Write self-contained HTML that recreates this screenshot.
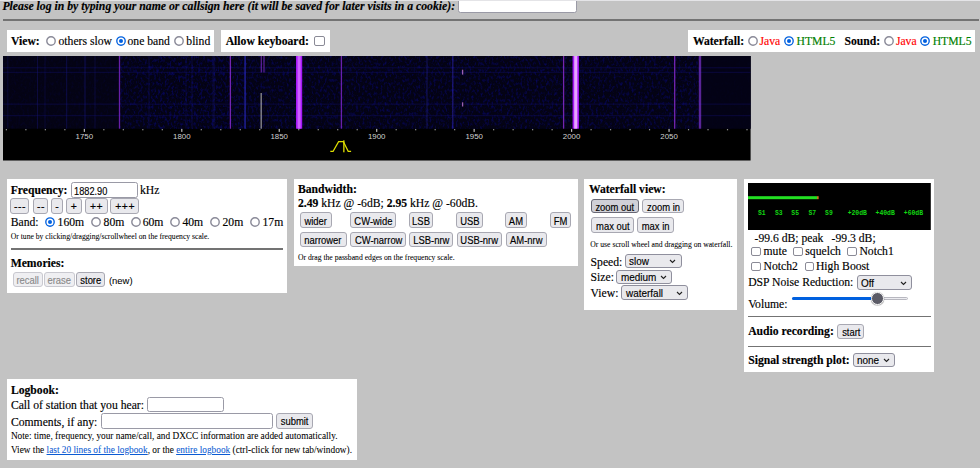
<!DOCTYPE html>
<html><head><meta charset="utf-8"><title>WebSDR</title><style>
html,body{margin:0;padding:0}
body{width:980px;height:468px;overflow:hidden;position:relative;background:#c3c3c3;font-family:"Liberation Serif",serif;color:#000;-webkit-text-stroke:0.15px currentColor}
.t{position:absolute;white-space:nowrap}
.p{position:absolute;background:#fff}
.hr2{position:absolute;background:#737373}
.rad{position:absolute;box-sizing:border-box;border:1.6px solid #80808e;border-radius:50%;background:#fff}
.rad.on{border:1.6px solid #0060df;background:#0060df;box-shadow:inset 0 0 0 1.6px #fff}
.cb{position:absolute;box-sizing:border-box;border:1.8px solid #8a8a96;border-radius:2px;background:#fff}
.btn{position:absolute;box-sizing:border-box;display:flex;align-items:center;justify-content:center;border:1.2px solid #a8a8b2;border-radius:3px;background:#e9e9ed;text-align:center;font-family:"Liberation Sans",sans-serif;color:#000;white-space:nowrap;overflow:hidden}
.btn.pm span{transform:translateY(1.1px) scaleX(1)!important;letter-spacing:0.6px;font-size:10.4px!important;padding-left:0.6px}
.btn.dis{border-color:#c9c9d0;color:#8a8a8a;background:#efeff2}
.btn.hov{background:#d0d0d7;border-color:#676774}
.sel{position:absolute;box-sizing:border-box;display:flex;align-items:center;border:1px solid #8f8f9d;border-radius:3px;background:#e9e9ed;font-family:"Liberation Sans",sans-serif;white-space:nowrap;overflow:hidden}
.sel .sl{display:inline-block;margin-left:3.2px;font-size:11.2px;line-height:11.2px;transform:translateY(0.9px) scaleX(0.89);transform-origin:0 50%}
.sel .chev{position:absolute;right:4.5px}
.inp{position:absolute;box-sizing:border-box;display:flex;align-items:center;border:1.1px solid #9a9aa6;border-radius:2.5px;background:#fff;font-family:"Liberation Sans",sans-serif;padding-left:2.5px;white-space:nowrap;overflow:hidden}
a{color:#0b5bd3;text-decoration:underline}
</style></head>
<body>
<div class="t" style="left:2.40px;top:0.57px;font-size:11.74px;line-height:11.74px;font-weight:bold;font-style:italic;">Please log in by typing your name or callsign here (it will be saved for later visits in a cookie):</div>
<div class="inp" style="left:457.50px;top:-2.00px;width:119.50px;height:15.20px;"></div>
<div class="hr2" style="left:3.00px;top:19.00px;width:976.00px;height:2.00px;"></div>
<div class="p" style="left:6.70px;top:30.30px;width:207.30px;height:21.70px;"></div>
<div class="t" style="left:11.00px;top:36.03px;font-size:11.66px;line-height:11.66px;font-weight:bold;">View:</div>
<svg width="10" height="10" viewBox="0 0 10 10" style="position:absolute;left:45.85px;top:36.30px"><circle cx="5" cy="5" r="4.2" fill="#fff" stroke="#8a8a98" stroke-width="1.4"/></svg>
<div class="t" style="left:58.50px;top:36.03px;font-size:11.66px;line-height:11.66px;">others slow</div>
<svg width="10" height="10" viewBox="0 0 10 10" style="position:absolute;left:116.25px;top:36.20px"><circle cx="5" cy="5" r="4.2" fill="#fff" stroke="#0060df" stroke-width="1.35"/><circle cx="5" cy="5" r="2.0" fill="#0060df"/></svg>
<div class="t" style="left:127.50px;top:36.03px;font-size:11.66px;line-height:11.66px;">one band</div>
<svg width="10" height="10" viewBox="0 0 10 10" style="position:absolute;left:174.25px;top:36.20px"><circle cx="5" cy="5" r="4.2" fill="#fff" stroke="#8a8a98" stroke-width="1.4"/></svg>
<div class="t" style="left:186.30px;top:36.03px;font-size:11.66px;line-height:11.66px;">blind</div>
<div class="p" style="left:221.10px;top:30.30px;width:109.10px;height:21.70px;"></div>
<div class="t" style="left:225.70px;top:36.03px;font-size:11.66px;line-height:11.66px;font-weight:bold;">Allow keyboard:</div>
<div class="cb" style="left:314.40px;top:36.20px;width:10.40px;height:10.20px;"></div>
<div class="p" style="left:688.30px;top:30.30px;width:286.50px;height:21.70px;"></div>
<div class="t" style="left:692.90px;top:36.03px;font-size:11.66px;line-height:11.66px;font-weight:bold;">Waterfall:</div>
<svg width="10" height="10" viewBox="0 0 10 10" style="position:absolute;left:747.55px;top:36.20px"><circle cx="5" cy="5" r="4.2" fill="#fff" stroke="#8a8a98" stroke-width="1.4"/></svg>
<div class="t" style="left:759.50px;top:36.03px;font-size:11.66px;line-height:11.66px;color:#f00;">Java</div>
<svg width="10" height="10" viewBox="0 0 10 10" style="position:absolute;left:784.45px;top:36.20px"><circle cx="5" cy="5" r="4.2" fill="#fff" stroke="#0060df" stroke-width="1.35"/><circle cx="5" cy="5" r="2.0" fill="#0060df"/></svg>
<div class="t" style="left:796.50px;top:36.03px;font-size:11.66px;line-height:11.66px;color:#008000;">HTML5</div>
<div class="t" style="left:844.50px;top:36.03px;font-size:11.66px;line-height:11.66px;font-weight:bold;">Sound:</div>
<svg width="10" height="10" viewBox="0 0 10 10" style="position:absolute;left:883.65px;top:36.20px"><circle cx="5" cy="5" r="4.2" fill="#fff" stroke="#8a8a98" stroke-width="1.4"/></svg>
<div class="t" style="left:895.90px;top:36.03px;font-size:11.66px;line-height:11.66px;color:#f00;">Java</div>
<svg width="10" height="10" viewBox="0 0 10 10" style="position:absolute;left:920.15px;top:36.20px"><circle cx="5" cy="5" r="4.2" fill="#fff" stroke="#0060df" stroke-width="1.35"/><circle cx="5" cy="5" r="2.0" fill="#0060df"/></svg>
<div class="t" style="left:932.70px;top:36.03px;font-size:11.66px;line-height:11.66px;color:#008000;">HTML5</div>
<svg width="747.60" height="104.50" viewBox="0 0 747.60 104.50" style="position:absolute;left:3.0px;top:56.0px;display:block"><defs><filter id="nz" x="0" y="0" width="100%" height="100%" color-interpolation-filters="sRGB"><feTurbulence type="fractalNoise" baseFrequency="0.45 0.3" numOctaves="2" seed="3"/><feColorMatrix values="0 0 0 0 0.03  0 0 0 0 0.03  0 0 0 0 0.42  0 0 0 2.4 -1.15"/></filter></defs><rect width="747.60" height="104.50" fill="#000"/><rect width="747.60" height="72.70" fill="#040314"/><rect x="117.00" y="0" width="580.00" height="72.70" fill="#040314"/><rect x="0" y="0" width="747.60" height="72.70" filter="url(#nz)" opacity="0.2"/><rect x="117.00" y="0" width="580.00" height="72.70" filter="url(#nz)" opacity="0.7"/><rect x="698.00" y="0" width="49.60" height="72.70" fill="#030216" opacity="0.65"/><rect x="147.00" y="0" width="95" height="72.70" filter="url(#nz)" opacity="0.3"/><rect x="0" y="11.30" width="747.60" height="1" fill="#14127a" opacity="0.4"/><rect x="0" y="15.80" width="747.60" height="1" fill="#14127a" opacity="0.4"/><rect x="0" y="47.60" width="747.60" height="1" fill="#14127a" opacity="0.4"/><rect x="0" y="59.20" width="747.60" height="1" fill="#14127a" opacity="0.4"/><rect x="4.30" y="0.00" width="1" height="72.70" fill="#1c1a8c" opacity="0.26"/><rect x="34.00" y="0.00" width="1" height="72.70" fill="#1c1a8c" opacity="0.34"/><rect x="41.50" y="0.00" width="1" height="72.70" fill="#1c1a8c" opacity="0.26"/><rect x="63.20" y="0.00" width="1" height="72.70" fill="#1c1a9c" opacity="0.38"/><rect x="81.40" y="0.00" width="1.2" height="72.70" fill="#2020a8" opacity="0.34"/><rect x="91.50" y="0.00" width="1" height="72.70" fill="#1c1a8c" opacity="0.30"/><rect x="115.85" y="0.00" width="1.3" height="72.70" fill="#8a2ad8" opacity="0.75"/><rect x="145.50" y="0.00" width="1" height="72.70" fill="#1c1a9c" opacity="0.30"/><rect x="182.50" y="0.00" width="1" height="72.70" fill="#1c1a9c" opacity="0.26"/><rect x="226.75" y="0.00" width="1.3" height="72.70" fill="#9a30e0" opacity="0.75"/><rect x="241.20" y="0.00" width="1.8" height="72.70" fill="#2828c0" opacity="0.60"/><rect x="257.70" y="0.00" width="1.2" height="16.50" fill="#8a30d0" opacity="0.68"/><rect x="260.40" y="0.00" width="1.2" height="16.50" fill="#8a30d0" opacity="0.68"/><rect x="209.35" y="0.00" width="2.5" height="72.70" fill="#1c1a9c" opacity="0.22"/><rect x="188.25" y="0.00" width="1.5" height="72.70" fill="#1c1a9c" opacity="0.22"/><rect x="257.50" y="37.00" width="1.4" height="35.70" fill="#b0b0b0" opacity="0.75"/><rect x="337.75" y="0.00" width="1.3" height="72.70" fill="#8a2ad8" opacity="0.75"/><rect x="423.40" y="0.00" width="1.2" height="72.70" fill="#3030c0" opacity="0.34"/><rect x="449.15" y="0.00" width="1.3" height="72.70" fill="#3a30e0" opacity="0.45"/><rect x="458.95" y="13.70" width="1.3" height="4.90" fill="#d080e0" opacity="0.75"/><rect x="458.95" y="46.30" width="1.3" height="4.20" fill="#d080e0" opacity="0.75"/><rect x="559.95" y="0.00" width="1.3" height="72.70" fill="#9a30e0" opacity="0.75"/><rect x="671.05" y="0.00" width="1.3" height="72.70" fill="#9a30e0" opacity="0.75"/><rect x="695.80" y="0.00" width="2.4" height="72.70" fill="#8a38e0" opacity="0.64"/><rect x="293.00" y="0" width="6.20" height="72.70" fill="#a818f8"/><rect x="294.60" y="0" width="3.00" height="72.70" fill="#cc60ff"/><rect x="569.60" y="0" width="6.30" height="72.70" fill="#a818f8"/><rect x="571.20" y="0" width="3.10" height="72.70" fill="#e6a6ff"/><rect x="2.79" y="73.10" width="1.2" height="1.2" fill="#9a9a9a"/><rect x="22.28" y="73.10" width="1.2" height="1.2" fill="#9a9a9a"/><rect x="41.77" y="73.10" width="1.2" height="1.2" fill="#9a9a9a"/><rect x="61.26" y="73.10" width="1.2" height="1.2" fill="#9a9a9a"/><rect x="80.75" y="72.90" width="1.2" height="3" fill="#bdbdbd"/><text x="81.35" y="83.00" font-family="Liberation Sans" font-size="7.9" fill="#d0d0d0" text-anchor="middle" stroke="none">1750</text><rect x="100.24" y="73.10" width="1.2" height="1.2" fill="#9a9a9a"/><rect x="119.73" y="73.10" width="1.2" height="1.2" fill="#9a9a9a"/><rect x="139.22" y="73.10" width="1.2" height="1.2" fill="#9a9a9a"/><rect x="158.71" y="73.10" width="1.2" height="1.2" fill="#9a9a9a"/><rect x="178.20" y="72.90" width="1.2" height="3" fill="#bdbdbd"/><text x="178.80" y="83.00" font-family="Liberation Sans" font-size="7.9" fill="#d0d0d0" text-anchor="middle" stroke="none">1800</text><rect x="197.69" y="73.10" width="1.2" height="1.2" fill="#9a9a9a"/><rect x="217.18" y="73.10" width="1.2" height="1.2" fill="#9a9a9a"/><rect x="236.67" y="73.10" width="1.2" height="1.2" fill="#9a9a9a"/><rect x="256.16" y="73.10" width="1.2" height="1.2" fill="#9a9a9a"/><rect x="275.65" y="72.90" width="1.2" height="3" fill="#bdbdbd"/><text x="276.25" y="83.00" font-family="Liberation Sans" font-size="7.9" fill="#d0d0d0" text-anchor="middle" stroke="none">1850</text><rect x="295.14" y="73.10" width="1.2" height="1.2" fill="#9a9a9a"/><rect x="314.63" y="73.10" width="1.2" height="1.2" fill="#9a9a9a"/><rect x="334.12" y="73.10" width="1.2" height="1.2" fill="#9a9a9a"/><rect x="353.61" y="73.10" width="1.2" height="1.2" fill="#9a9a9a"/><rect x="373.10" y="72.90" width="1.2" height="3" fill="#bdbdbd"/><text x="373.70" y="83.00" font-family="Liberation Sans" font-size="7.9" fill="#d0d0d0" text-anchor="middle" stroke="none">1900</text><rect x="392.59" y="73.10" width="1.2" height="1.2" fill="#9a9a9a"/><rect x="412.08" y="73.10" width="1.2" height="1.2" fill="#9a9a9a"/><rect x="431.57" y="73.10" width="1.2" height="1.2" fill="#9a9a9a"/><rect x="451.06" y="73.10" width="1.2" height="1.2" fill="#9a9a9a"/><rect x="470.55" y="72.90" width="1.2" height="3" fill="#bdbdbd"/><text x="471.15" y="83.00" font-family="Liberation Sans" font-size="7.9" fill="#d0d0d0" text-anchor="middle" stroke="none">1950</text><rect x="490.04" y="73.10" width="1.2" height="1.2" fill="#9a9a9a"/><rect x="509.53" y="73.10" width="1.2" height="1.2" fill="#9a9a9a"/><rect x="529.02" y="73.10" width="1.2" height="1.2" fill="#9a9a9a"/><rect x="548.51" y="73.10" width="1.2" height="1.2" fill="#9a9a9a"/><rect x="568.00" y="72.90" width="1.2" height="3" fill="#bdbdbd"/><text x="568.60" y="83.00" font-family="Liberation Sans" font-size="7.9" fill="#d0d0d0" text-anchor="middle" stroke="none">2000</text><rect x="587.49" y="73.10" width="1.2" height="1.2" fill="#9a9a9a"/><rect x="606.98" y="73.10" width="1.2" height="1.2" fill="#9a9a9a"/><rect x="626.47" y="73.10" width="1.2" height="1.2" fill="#9a9a9a"/><rect x="645.96" y="73.10" width="1.2" height="1.2" fill="#9a9a9a"/><rect x="665.45" y="72.90" width="1.2" height="3" fill="#bdbdbd"/><text x="666.05" y="83.00" font-family="Liberation Sans" font-size="7.9" fill="#d0d0d0" text-anchor="middle" stroke="none">2050</text><rect x="684.94" y="73.10" width="1.2" height="1.2" fill="#9a9a9a"/><rect x="704.43" y="73.10" width="1.2" height="1.2" fill="#9a9a9a"/><rect x="723.92" y="73.10" width="1.2" height="1.2" fill="#9a9a9a"/><rect x="743.41" y="73.10" width="1.2" height="1.2" fill="#9a9a9a"/><path d="M327.30 95.30 L330.10 95.30 L335.60 85.70 L340.40 85.70 L345.20 95.30 L348.10 95.30" fill="none" stroke="#dede00" stroke-width="1.2"/><rect x="340.20" y="84.30" width="1.3" height="12" fill="#dede00"/></svg>
<div class="p" style="left:6.80px;top:178.70px;width:280.30px;height:114.20px;"></div>
<div class="t" style="left:10.70px;top:185.23px;font-size:11.66px;line-height:11.66px;font-weight:bold;">Frequency:</div>
<div class="inp" style="left:70.50px;top:182.40px;width:67.10px;height:15.40px;"><span style="font-size:11px;line-height:11px;display:inline-block;transform:translateY(0.6px) scaleX(0.84);transform-origin:0 50%">1882.90</span></div>
<div class="t" style="left:140.00px;top:185.23px;font-size:11.66px;line-height:11.66px;">kHz</div>
<div class="btn pm" style="left:10.20px;top:198.40px;width:19.20px;height:15.30px;"><span style="font-size:10.6px;line-height:10.6px;display:inline-block;transform:translateY(0.9px) scaleX(0.89)">---</span></div>
<div class="btn pm" style="left:33.00px;top:198.40px;width:15.40px;height:15.30px;"><span style="font-size:10.6px;line-height:10.6px;display:inline-block;transform:translateY(0.9px) scaleX(0.89)">--</span></div>
<div class="btn pm" style="left:51.40px;top:198.40px;width:11.20px;height:15.30px;"><span style="font-size:10.6px;line-height:10.6px;display:inline-block;transform:translateY(0.9px) scaleX(0.89)">-</span></div>
<div class="btn pm" style="left:66.00px;top:198.40px;width:15.60px;height:15.30px;"><span style="font-size:10.6px;line-height:10.6px;display:inline-block;transform:translateY(0.9px) scaleX(0.89)">+</span></div>
<div class="btn pm" style="left:85.00px;top:198.40px;width:22.50px;height:15.30px;"><span style="font-size:10.6px;line-height:10.6px;display:inline-block;transform:translateY(0.9px) scaleX(0.89)">++</span></div>
<div class="btn pm" style="left:110.40px;top:198.40px;width:28.90px;height:15.30px;"><span style="font-size:10.6px;line-height:10.6px;display:inline-block;transform:translateY(0.9px) scaleX(0.89)">+++</span></div>
<div class="t" style="left:10.70px;top:216.73px;font-size:11.66px;line-height:11.66px;">Band:</div>
<svg width="10" height="10" viewBox="0 0 10 10" style="position:absolute;left:45.40px;top:216.80px"><circle cx="5" cy="5" r="4.2" fill="#fff" stroke="#0060df" stroke-width="1.35"/><circle cx="5" cy="5" r="2.0" fill="#0060df"/></svg>
<div class="t" style="left:57.60px;top:216.73px;font-size:11.66px;line-height:11.66px;">160m</div>
<svg width="10" height="10" viewBox="0 0 10 10" style="position:absolute;left:91.20px;top:216.80px"><circle cx="5" cy="5" r="4.2" fill="#fff" stroke="#8a8a98" stroke-width="1.4"/></svg>
<div class="t" style="left:103.60px;top:216.73px;font-size:11.66px;line-height:11.66px;">80m</div>
<svg width="10" height="10" viewBox="0 0 10 10" style="position:absolute;left:130.90px;top:216.80px"><circle cx="5" cy="5" r="4.2" fill="#fff" stroke="#8a8a98" stroke-width="1.4"/></svg>
<div class="t" style="left:142.70px;top:216.73px;font-size:11.66px;line-height:11.66px;">60m</div>
<svg width="10" height="10" viewBox="0 0 10 10" style="position:absolute;left:170.15px;top:216.80px"><circle cx="5" cy="5" r="4.2" fill="#fff" stroke="#8a8a98" stroke-width="1.4"/></svg>
<div class="t" style="left:182.40px;top:216.73px;font-size:11.66px;line-height:11.66px;">40m</div>
<svg width="10" height="10" viewBox="0 0 10 10" style="position:absolute;left:210.30px;top:216.80px"><circle cx="5" cy="5" r="4.2" fill="#fff" stroke="#8a8a98" stroke-width="1.4"/></svg>
<div class="t" style="left:222.50px;top:216.73px;font-size:11.66px;line-height:11.66px;">20m</div>
<svg width="10" height="10" viewBox="0 0 10 10" style="position:absolute;left:249.95px;top:216.80px"><circle cx="5" cy="5" r="4.2" fill="#fff" stroke="#8a8a98" stroke-width="1.4"/></svg>
<div class="t" style="left:262.50px;top:216.73px;font-size:11.66px;line-height:11.66px;">17m</div>
<div class="t" style="left:10.70px;top:233.18px;font-size:7.66px;line-height:7.66px;-webkit-text-stroke:0.06px currentColor;">Or tune by clicking/dragging/scrollwheel on the frequency scale.</div>
<div class="hr2" style="left:10.50px;top:248.30px;width:272.50px;height:1.30px;"></div>
<div class="t" style="left:10.70px;top:257.83px;font-size:11.66px;line-height:11.66px;font-weight:bold;">Memories:</div>
<div class="btn dis" style="left:12.60px;top:272.10px;width:30.50px;height:15.30px;"><span style="font-size:10.6px;line-height:10.6px;display:inline-block;transform:translateY(0.9px) scaleX(0.89)">recall</span></div>
<div class="btn dis" style="left:44.00px;top:272.10px;width:31.00px;height:15.30px;"><span style="font-size:10.6px;line-height:10.6px;display:inline-block;transform:translateY(0.9px) scaleX(0.89)">erase</span></div>
<div class="btn" style="left:75.70px;top:272.10px;width:29.70px;height:15.30px;"><span style="font-size:10.6px;line-height:10.6px;display:inline-block;transform:translateY(0.9px) scaleX(0.89)">store</span></div>
<div class="t" style="left:108.90px;top:275.56px;font-size:9.5px;line-height:9.5px;-webkit-text-stroke:0.06px currentColor;font-family:'Liberation Sans',sans-serif;">(new)</div>
<div class="p" style="left:293.50px;top:178.80px;width:284.30px;height:87.70px;"></div>
<div class="t" style="left:297.90px;top:184.13px;font-size:11.66px;line-height:11.66px;font-weight:bold;">Bandwidth:</div>
<div class="t" style="left:297.90px;top:198.13px;font-size:11.66px;line-height:11.66px;"><b>2.49</b> kHz @ -6dB; <b>2.95</b> kHz @ -60dB.</div>
<div class="btn" style="left:300.00px;top:212.30px;width:31.60px;height:15.40px;"><span style="font-size:10.6px;line-height:10.6px;display:inline-block;transform:translateY(0.9px) scaleX(0.89)">wider</span></div>
<div class="btn" style="left:350.00px;top:212.30px;width:45.90px;height:15.40px;"><span style="font-size:10.6px;line-height:10.6px;display:inline-block;transform:translateY(0.9px) scaleX(0.89)">CW-wide</span></div>
<div class="btn" style="left:409.30px;top:212.30px;width:24.10px;height:15.40px;"><span style="font-size:10.6px;line-height:10.6px;display:inline-block;transform:translateY(0.9px) scaleX(0.89)">LSB</span></div>
<div class="btn" style="left:456.40px;top:212.30px;width:26.80px;height:15.40px;"><span style="font-size:10.6px;line-height:10.6px;display:inline-block;transform:translateY(0.9px) scaleX(0.89)">USB</span></div>
<div class="btn" style="left:505.10px;top:212.30px;width:22.40px;height:15.40px;"><span style="font-size:10.6px;line-height:10.6px;display:inline-block;transform:translateY(0.9px) scaleX(0.89)">AM</span></div>
<div class="btn" style="left:550.20px;top:212.30px;width:20.90px;height:15.40px;"><span style="font-size:10.6px;line-height:10.6px;display:inline-block;transform:translateY(0.9px) scaleX(0.89)">FM</span></div>
<div class="btn" style="left:300.00px;top:231.50px;width:46.60px;height:15.60px;"><span style="font-size:10.6px;line-height:10.6px;display:inline-block;transform:translateY(0.9px) scaleX(0.89)">narrower</span></div>
<div class="btn" style="left:350.20px;top:231.50px;width:56.10px;height:15.60px;"><span style="font-size:10.6px;line-height:10.6px;display:inline-block;transform:translateY(0.9px) scaleX(0.89)">CW-narrow</span></div>
<div class="btn" style="left:409.40px;top:231.50px;width:44.00px;height:15.60px;"><span style="font-size:10.6px;line-height:10.6px;display:inline-block;transform:translateY(0.9px) scaleX(0.89)">LSB-nrw</span></div>
<div class="btn" style="left:456.80px;top:231.50px;width:45.70px;height:15.60px;"><span style="font-size:10.6px;line-height:10.6px;display:inline-block;transform:translateY(0.9px) scaleX(0.89)">USB-nrw</span></div>
<div class="btn" style="left:505.50px;top:231.50px;width:41.30px;height:15.60px;"><span style="font-size:10.6px;line-height:10.6px;display:inline-block;transform:translateY(0.9px) scaleX(0.89)">AM-nrw</span></div>
<div class="t" style="left:297.90px;top:253.98px;font-size:7.66px;line-height:7.66px;-webkit-text-stroke:0.06px currentColor;">Or drag the passband edges on the frequency scale.</div>
<div class="p" style="left:584.30px;top:178.80px;width:152.60px;height:130.90px;"></div>
<div class="t" style="left:588.90px;top:183.83px;font-size:11.66px;line-height:11.66px;font-weight:bold;">Waterfall view:</div>
<div class="btn hov" style="left:591.10px;top:198.60px;width:47.90px;height:14.90px;"><span style="font-size:10.6px;line-height:10.6px;display:inline-block;transform:translateY(0.9px) scaleX(0.89)">zoom out</span></div>
<div class="btn" style="left:642.40px;top:198.60px;width:41.50px;height:14.90px;"><span style="font-size:10.6px;line-height:10.6px;display:inline-block;transform:translateY(0.9px) scaleX(0.89)">zoom in</span></div>
<div class="btn" style="left:591.10px;top:217.40px;width:43.30px;height:16.10px;"><span style="font-size:10.6px;line-height:10.6px;display:inline-block;transform:translateY(0.9px) scaleX(0.89)">max out</span></div>
<div class="btn" style="left:637.30px;top:217.40px;width:37.20px;height:16.10px;"><span style="font-size:10.6px;line-height:10.6px;display:inline-block;transform:translateY(0.9px) scaleX(0.89)">max in</span></div>
<div class="t" style="left:590.30px;top:240.68px;font-size:7.66px;line-height:7.66px;-webkit-text-stroke:0.06px currentColor;">Or use scroll wheel and dragging on waterfall.</div>
<div class="t" style="left:590.60px;top:256.63px;font-size:11.66px;line-height:11.66px;">Speed:</div>
<div class="sel" style="left:625.30px;top:253.50px;width:56.40px;height:14.80px;"><span class="sl">slow</span><svg class="chev" width="7" height="5" viewBox="0 0 7 5" style="top:4.90px"><path d="M1 1 L3.5 3.5 L6 1" fill="none" stroke="#222" stroke-width="1.1"/></svg></div>
<div class="t" style="left:590.60px;top:272.03px;font-size:11.66px;line-height:11.66px;">Size:</div>
<div class="sel" style="left:616.40px;top:269.70px;width:55.90px;height:14.50px;"><span class="sl">medium</span><svg class="chev" width="7" height="5" viewBox="0 0 7 5" style="top:4.75px"><path d="M1 1 L3.5 3.5 L6 1" fill="none" stroke="#222" stroke-width="1.1"/></svg></div>
<div class="t" style="left:590.60px;top:287.93px;font-size:11.66px;line-height:11.66px;">View:</div>
<div class="sel" style="left:621.40px;top:285.40px;width:67.10px;height:15.10px;"><span class="sl">waterfall</span><svg class="chev" width="7" height="5" viewBox="0 0 7 5" style="top:5.05px"><path d="M1 1 L3.5 3.5 L6 1" fill="none" stroke="#222" stroke-width="1.1"/></svg></div>
<div class="p" style="left:744.30px;top:178.80px;width:189.70px;height:193.60px;"></div>
<svg width="182.80" height="47.00" style="position:absolute;left:748px;top:182.7px;display:block"><rect width="100%" height="100%" fill="#000"/><rect x="0" y="13.20" width="69.10" height="3" fill="#22e022"/><rect x="69.10" y="13.20" width="1.5" height="3" fill="#e08020"/><text x="9.90" y="32.00" font-family="Liberation Mono" font-size="6.4" font-weight="bold" fill="#12d812">S1</text><text x="27.00" y="32.00" font-family="Liberation Mono" font-size="6.4" font-weight="bold" fill="#12d812">S3</text><text x="43.30" y="32.00" font-family="Liberation Mono" font-size="6.4" font-weight="bold" fill="#12d812">S5</text><text x="60.40" y="32.00" font-family="Liberation Mono" font-size="6.4" font-weight="bold" fill="#12d812">S7</text><text x="77.10" y="32.00" font-family="Liberation Mono" font-size="6.4" font-weight="bold" fill="#12d812">S9</text><text x="99.70" y="32.00" font-family="Liberation Mono" font-size="6.4" font-weight="bold" fill="#12d812">+20dB</text><text x="127.60" y="32.00" font-family="Liberation Mono" font-size="6.4" font-weight="bold" fill="#12d812">+40dB</text><text x="155.80" y="32.00" font-family="Liberation Mono" font-size="6.4" font-weight="bold" fill="#12d812">+60dB</text></svg>
<div class="t" style="left:754.50px;top:232.53px;font-size:11.66px;line-height:11.66px;">-99.6 dB; peak</div>
<div class="t" style="left:831.60px;top:232.53px;font-size:11.66px;line-height:11.66px;">-99.3 dB;</div>
<div class="cb" style="left:751.40px;top:246.80px;width:9.50px;height:9.50px;"></div>
<div class="t" style="left:763.50px;top:246.33px;font-size:11.66px;line-height:11.66px;">mute</div>
<div class="cb" style="left:793.20px;top:246.80px;width:9.50px;height:9.50px;"></div>
<div class="t" style="left:805.30px;top:246.33px;font-size:11.66px;line-height:11.66px;">squelch</div>
<div class="cb" style="left:847.30px;top:246.80px;width:9.50px;height:9.50px;"></div>
<div class="t" style="left:859.40px;top:246.33px;font-size:11.66px;line-height:11.66px;">Notch1</div>
<div class="cb" style="left:751.40px;top:261.60px;width:9.50px;height:9.50px;"></div>
<div class="t" style="left:763.50px;top:261.03px;font-size:11.66px;line-height:11.66px;">Notch2</div>
<div class="cb" style="left:804.50px;top:261.60px;width:9.50px;height:9.50px;"></div>
<div class="t" style="left:815.90px;top:261.03px;font-size:11.66px;line-height:11.66px;">High Boost</div>
<div class="t" style="left:748.20px;top:276.73px;font-size:11.66px;line-height:11.66px;">DSP Noise Reduction:</div>
<div class="sel" style="left:857.30px;top:275.00px;width:55.10px;height:14.50px;"><span class="sl">Off</span><svg class="chev" width="7" height="5" viewBox="0 0 7 5" style="top:4.75px"><path d="M1 1 L3.5 3.5 L6 1" fill="none" stroke="#222" stroke-width="1.1"/></svg></div>
<div class="t" style="left:748.20px;top:298.53px;font-size:11.66px;line-height:11.66px;">Volume:</div>
<div style="position:absolute;left:792.3px;top:296.5px;width:116px;height:3.6px;border-radius:2px;background:#ececf0;border:0.7px solid #b8b8c0;box-sizing:border-box"></div><div style="position:absolute;left:792.3px;top:296.5px;width:85.30px;height:3.6px;border-radius:2px;background:#0060df"></div><div style="position:absolute;left:871.10px;top:291.90px;width:12.8px;height:12.8px;border-radius:50%;background:#5b5b66;box-sizing:border-box;border:1.5px solid #fff;box-shadow:0 0.3px 0.8px 0.3px rgba(0,0,0,0.35)"></div>
<div class="hr2" style="left:748.20px;top:315.80px;width:182.60px;height:1.20px;"></div>
<div class="t" style="left:748.20px;top:326.43px;font-size:11.66px;line-height:11.66px;font-weight:bold;">Audio recording:</div>
<div class="btn" style="left:837.30px;top:323.50px;width:27.20px;height:15.30px;"><span style="font-size:10.6px;line-height:10.6px;display:inline-block;transform:translateY(0.9px) scaleX(0.89)">start</span></div>
<div class="hr2" style="left:748.20px;top:345.60px;width:182.60px;height:1.20px;"></div>
<div class="t" style="left:748.20px;top:355.43px;font-size:11.66px;line-height:11.66px;font-weight:bold;">Signal strength plot:</div>
<div class="sel" style="left:853.30px;top:352.70px;width:42.20px;height:14.60px;"><span class="sl">none</span><svg class="chev" width="7" height="5" viewBox="0 0 7 5" style="top:4.80px"><path d="M1 1 L3.5 3.5 L6 1" fill="none" stroke="#222" stroke-width="1.1"/></svg></div>
<div class="p" style="left:6.90px;top:379.00px;width:350.10px;height:81.40px;"></div>
<div class="t" style="left:10.90px;top:385.13px;font-size:11.66px;line-height:11.66px;font-weight:bold;">Logbook:</div>
<div class="t" style="left:10.90px;top:400.43px;font-size:11.66px;line-height:11.66px;">Call of station that you hear:</div>
<div class="inp" style="left:146.50px;top:396.80px;width:77.10px;height:15.10px;"></div>
<div class="t" style="left:10.90px;top:417.23px;font-size:11.66px;line-height:11.66px;">Comments, if any:</div>
<div class="inp" style="left:100.50px;top:413.30px;width:172.70px;height:15.30px;"></div>
<div class="btn" style="left:276.40px;top:412.50px;width:37.00px;height:16.20px;"><span style="font-size:10.6px;line-height:10.6px;display:inline-block;transform:translateY(0.9px) scaleX(0.89)">submit</span></div>
<div class="t" style="left:10.90px;top:432.49px;font-size:9.32px;line-height:9.32px;-webkit-text-stroke:0.06px currentColor;">Note: time, frequency, your name/call, and DXCC information are added automatically.</div>
<div class="t" style="left:10.90px;top:445.89px;font-size:9.32px;line-height:9.32px;-webkit-text-stroke:0.06px currentColor;">View the <a>last 20 lines of the logbook</a>, or the <a>entire logbook</a> (ctrl-click for new tab/window).</div>
<div style="position:absolute;left:0;top:0;width:980px;height:1px;background:#e4e4e7"></div>
</body></html>
